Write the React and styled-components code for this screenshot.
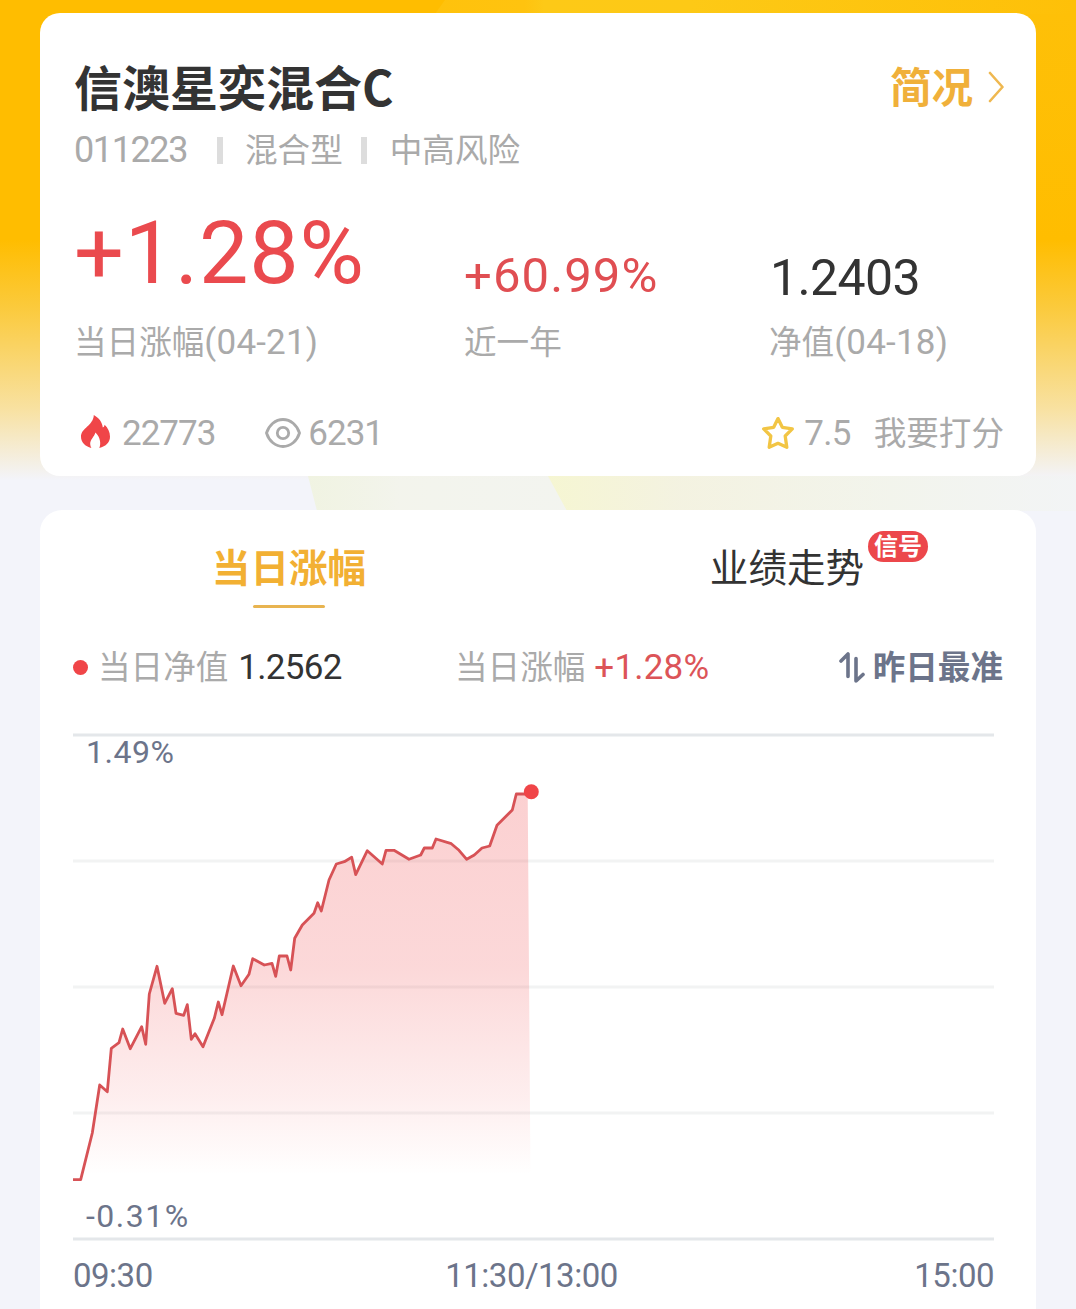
import React from "react";
import styled, { createGlobalStyle } from "styled-components";

const Global = createGlobalStyle`
  * { box-sizing: border-box; }
  body {
    margin: 0;
    background: #f3f4fa;
    font-family: Roboto, "Noto Sans CJK SC", sans-serif;
    color: #333;
  }
`;

const Page = styled.main`
  position: relative;
  width: 1076px;
  height: 1309px;
  overflow: hidden;
  padding: 13px 40px 0;
  display: flex;
  flex-direction: column;
  gap: 34px;
`;

const Backdrop = styled.svg`
  position: absolute;
  inset: 0;
  display: block;
`;

const Card = styled.section`
  position: relative;
  flex: none;
  height: ${(p) => p.$height}px;
  padding: ${(p) => p.$pad};
  border-radius: ${(p) => p.$radius || "20px"};
  background: #fff;
`;

const Row = styled.div`
  display: flex;
  align-items: center;
  justify-content: ${(p) => p.$justify || "flex-start"};
  height: ${(p) => p.$height}px;
`;

const Text = styled.span`
  font-size: ${(p) => p.$size || 32.6}px;
  font-weight: ${(p) => p.$weight || 400};
  letter-spacing: ${(p) => p.$spacing || 0}px;
  color: ${(p) => p.$color || "#aaa"};
  line-height: 1;
  white-space: nowrap;
  margin-left: ${(p) => p.$ml || 0}px;
`;

const Label = styled(Text)`
  padding-top: 2px;
`;

const IconBox = styled.span`
  display: flex;
  margin-left: ${(p) => p.$ml || 0}px;
  padding-bottom: ${(p) => p.$lift || 0}px;
`;

const Title = styled.h1`
  margin: 0;
  padding-bottom: 4px;
  font: 700 48px/1 "Noto Sans CJK SC", sans-serif;
  color: #333;
`;

const ProfileLink = styled.a`
  display: flex;
  align-items: center;
  gap: 14px;
  font: 700 41.5px/1 "Noto Sans CJK SC", sans-serif;
  color: #f0b03a;
`;

const LinkText = styled.span`
  padding-bottom: 3px;
`;

const Divider = styled.i`
  width: 6px;
  height: 27px;
  background: #ddd;
  margin-left: ${(p) => p.$ml}px;
`;

const Stats = styled.div`
  display: grid;
  grid-template-columns: 390px 305px 1fr;
  margin-top: 25px;
  height: 170px;
`;

const Stat = styled.div`
  display: flex;
  flex-direction: column;
`;

const StatValue = styled.div`
  height: 108px;
  padding-top: ${(p) => p.$top}px;
  padding-left: ${(p) => p.$left || 0}px;
  font-size: ${(p) => p.$size}px;
  letter-spacing: ${(p) => p.$spacing || 0}px;
  line-height: 1;
  color: ${(p) => p.$color};
  white-space: nowrap;
`;

const StatLabel = styled.div`
  display: flex;
  align-items: center;
  height: 66px;
`;

const Tabs = styled.nav`
  display: grid;
  grid-template-columns: 1fr 1fr;
  height: 116px;
  margin: 0 -33px;
`;

const Tab = styled.div`
  position: relative;
  display: flex;
  justify-content: center;
  align-items: center;
  height: 116px;
  padding-bottom: 6px;
  font: ${(p) => (p.$active ? 700 : 400)} 38.6px/1 "Noto Sans CJK SC", sans-serif;
  color: ${(p) => (p.$active ? "#f2b033" : "#333")};
`;

const Underline = styled.i`
  position: absolute;
  left: 213px;
  top: 95px;
  width: 72px;
  height: 3px;
  border-radius: 2px;
  background: #e8b450;
`;

const Badge = styled.b`
  position: absolute;
  left: 330px;
  top: 21px;
  width: 60px;
  height: 31px;
  padding-bottom: 3px;
  border-radius: 16px;
  display: flex;
  align-items: center;
  justify-content: center;
  font-size: 24px;
  line-height: 1;
  color: #fff;
  background: #ec474b;
`;

const Legend = styled.div`
  display: grid;
  grid-template-columns: 382px 1fr auto;
  align-items: center;
  height: 82px;
`;

const LegendItem = styled.div`
  display: flex;
  align-items: center;
`;

const Dot = styled.i`
  width: 15px;
  height: 15px;
  border-radius: 50%;
  background: #f04548;
  margin-right: 10px;
`;

const Plot = styled.div`
  display: grid;
  width: 921px;
  height: 514px;
  margin-top: 22px;
  > * { grid-area: 1 / 1; }
`;

const Bounds = styled.div`
  display: flex;
  flex-direction: column;
  justify-content: space-between;
  padding: 6px 0 12px 13px;
`;

const Axis = styled.div`
  display: grid;
  grid-template-columns: 1fr auto 1fr;
  width: 921px;
  height: 62px;
  align-items: center;
  > :nth-child(2) { padding-right: 4px; }
  > :last-child { text-align: right; }
`;

const RED = "#ea4a4e";
const SLATE = "#6c748a";

const points = [
  [73, 1179.7], [80.7, 1179.7], [92.3, 1133], [99.7, 1085], [107.3, 1091.7], [111.3, 1048.3],
  [119, 1042.7], [122.7, 1029], [130.3, 1048.7], [141.7, 1026.7], [145.7, 1044.3], [149.3, 994],
  [157, 966.3], [164.7, 1003.3], [172.3, 988.7], [176, 1013.3], [183.7, 1015.3], [187.3, 1004.7],
  [191.3, 1039.3], [195, 1033.7], [203, 1046.7], [214.3, 1018.3], [218.3, 1002], [222, 1014.7],
  [233.3, 966], [241, 985.7], [249, 974.3], [252.7, 958.7], [264.3, 965], [272, 963.3],
  [275.7, 976.3], [279.3, 956], [287, 956], [290.7, 970], [294.7, 938.3], [302.3, 925],
  [314, 913.3], [317.7, 902.7], [321.3, 911], [329, 880], [336.3, 864], [344.3, 861.7],
  [351.7, 857.3], [355.7, 874.7], [367.3, 850.7], [382.3, 864], [386, 850.3], [394, 850.3],
  [409, 859.3], [420.7, 855], [424.3, 848], [432.3, 848], [436, 839], [451.3, 843.7],
  [459, 850.3], [466.7, 859.3], [474.3, 855], [482, 848], [489.7, 846], [497, 825.3],
  [512.3, 810], [516.3, 794], [527.7, 794],
];
const line = points.map((p) => p.join(",")).join(" ");

function Flame() {
  return (
    <svg width="29" height="33" viewBox="0 0 29 33">
      <path
        d="M12.8 0C18 3 21.2 7 21.8 12.6 23 12 23.4 11 23.6 9.8 27 13 29 17 29 21.6 29 27.6 25 31.4 18.3 33 20.4 28.4 19 21.6 14.4 17.4 13.4 21.6 9 24.4 9.2 29 9.3 30.6 9.7 31.8 10.4 33 4 31.2 0 27.2 0 21.7 0 13 12.5 10.5 12.8 0Z"
        fill="#f04548"
      />
    </svg>
  );
}

function Eye() {
  return (
    <svg width="36" height="30" viewBox="0 0 36 30" fill="none" stroke="#aaa" strokeWidth="2.8">
      <path d="M1.5 15C4 7 10.400 1.500 18 1.500S32 7 34.500 15C32 23 25.600 28.500 18 28.500S4 23 1.500 15Z" />
      <circle cx="18" cy="15" r="5.700" />
    </svg>
  );
}

function Star() {
  return (
    <svg width="34" height="34" viewBox="0 0 34 34" fill="none" stroke="#f2c544" strokeWidth="3.300" strokeLinejoin="round">
      <path d="M17 2.600 21.300 11.300 31.300 12.900 24.200 20 25.800 31.300 17 27.300 8.200 31.300 9.800 20 2.700 12.900 12.700 11.300Z" />
    </svg>
  );
}

function Swap() {
  return (
    <svg width="26" height="32" viewBox="0 0 26 32" fill="none" stroke={SLATE} strokeWidth="3.600" strokeLinecap="round" strokeLinejoin="round">
      <path d="M2 10 9 3V25.500" />
      <path d="M17 7.500V30L24 23.500" />
    </svg>
  );
}

function Chart() {
  return (
    <svg width="921" height="514" viewBox="73 730 921 514">
      <defs>
        <linearGradient id="area" gradientUnits="userSpaceOnUse" x1="0" y1="794" x2="0" y2="1175">
          <stop offset="0" stopColor="#f04548" stopOpacity="0.25" />
          <stop offset="0.45" stopColor="#f04548" stopOpacity="0.21" />
          <stop offset="0.8" stopColor="#f04548" stopOpacity="0.09" />
          <stop offset="1" stopColor="#f04548" stopOpacity="0" />
        </linearGradient>
      </defs>
      {[861, 987, 1113].map((y) => (
        <path key={y} d={`M73 ${y}H994`} stroke="#f2f3f3" strokeWidth="3" />
      ))}
      {[735, 1239].map((y) => (
        <path key={y} d={`M73 ${y}H994`} stroke="#e4e7ea" strokeWidth="3" />
      ))}
      <polygon points={`${line} 530.5,1180 73,1180`} fill="url(#area)" />
      <polyline points={line} fill="none" stroke="#d75256" strokeWidth="2.8" strokeLinejoin="round" />
      <circle cx="531.3" cy="791.7" r="7.5" fill="#f04548" />
    </svg>
  );
}

function Background() {
  return (
    <Backdrop width="1076" height="1309">
      <defs>
        <linearGradient id="sky" gradientUnits="userSpaceOnUse" x1="0" y1="0" x2="0" y2="480">
          <stop offset="0" stopColor="#ffbd00" />
          <stop offset="0.5" stopColor="#ffbd00" />
          <stop offset="0.64" stopColor="#fbca3c" />
          <stop offset="0.85" stopColor="#f8e1a0" />
          <stop offset="1" stopColor="#f3f4fa" />
        </linearGradient>
        <linearGradient id="wide" x1="0" x2="1">
          <stop offset="0" stopColor="#eff3d8" stopOpacity="0.7" />
          <stop offset="0.12" stopColor="#f3f4ea" stopOpacity="0.85" />
          <stop offset="1" stopColor="#f2f4f2" stopOpacity="0.5" />
        </linearGradient>
        <linearGradient id="narrow" x1="0" x2="1">
          <stop offset="0" stopColor="#f6f6cf" stopOpacity="0.9" />
          <stop offset="0.25" stopColor="#f4f2de" stopOpacity="0.85" />
          <stop offset="0.65" stopColor="#f2f4ea" stopOpacity="0.8" />
          <stop offset="1" stopColor="#f2f4f4" stopOpacity="0.5" />
        </linearGradient>
        <linearGradient id="glow" x1="0" x2="1">
          <stop offset="0" stopColor="#ffc20c" />
          <stop offset="0.14" stopColor="#ffc30f" />
          <stop offset="0.17" stopColor="#fdc917" />
          <stop offset="0.4" stopColor="#fdc916" />
          <stop offset="1" stopColor="#fec008" />
        </linearGradient>
        <linearGradient id="edge" x1="0" y1="0" x2="0" y2="1">
          <stop offset="0" stopColor="#fec008" />
          <stop offset="1" stopColor="#fec008" stopOpacity="0" />
        </linearGradient>
      </defs>
      <rect width="1076" height="1309" fill="#f3f4fa" />
      <rect width="1076" height="480" fill="url(#sky)" />
      <path d="M445 0H1076V14H435Z" fill="url(#glow)" />
      <rect x="1010" y="14" width="66" height="226" fill="url(#edge)" />
      <path d="M308 476H1076V511H317Z" fill="url(#wide)" />
      <path d="M548 476H1076V511H567Z" fill="url(#narrow)" />
    </Backdrop>
  );
}

export default function App() {
  return (
    <Page>
      <Global />
      <Background />
      <Card $height={463} $pad="37px 32px 0 34px">
        <Row $height={74} $justify="space-between">
          <Title>信澳星奕混合C</Title>
          <ProfileLink>
            <LinkText>简况</LinkText>
            <svg width="17" height="32" viewBox="0 0 17 32" fill="none" stroke="#efb850" strokeWidth="2.6" strokeLinecap="round" strokeLinejoin="round">
              <path d="M3 2 15.500 16 3 30" />
            </svg>
          </ProfileLink>
        </Row>
        <Row $height={52}>
          <Text $size={36} $spacing={-1.4}>011223</Text>
          <Divider $ml={30} />
          <Label $ml={22}>混合型</Label>
          <Divider $ml={18} />
          <Label $ml={23}>中高风险</Label>
        </Row>
        <Stats>
          <Stat>
            <StatValue $size={88} $top={8} $left={-3} $spacing={0.8} $color={RED}>+1.28%</StatValue>
            <StatLabel>
              <Label>当日涨幅</Label>
              <Text $size={35} $spacing={0.2}>(04-21)</Text>
            </StatLabel>
          </Stat>
          <Stat>
            <StatValue $size={49} $top={50} $spacing={1.1} $color="#e04e52">+60.99%</StatValue>
            <StatLabel>
              <Label>近一年</Label>
            </StatLabel>
          </Stat>
          <Stat>
            <StatValue $size={50} $top={52} $left={1} $spacing={-0.6} $color="#333">1.2403</StatValue>
            <StatLabel>
              <Label>净值</Label>
              <Text $size={35} $spacing={0.2}>(04-18)</Text>
            </StatLabel>
          </Stat>
        </Stats>
        <Row $height={124} $justify="space-between">
          <Row $height={40}>
            <IconBox $ml={7} $lift={4}><Flame /></IconBox>
            <Text $ml={12} $size={35} $spacing={-1}>22773</Text>
            <IconBox $ml={50}><Eye /></IconBox>
            <Text $ml={7} $size={35} $spacing={-1}>6231</Text>
          </Row>
          <Row $height={40}>
            <Star />
            <Text $ml={9} $size={35} $spacing={-0.7}>7.5</Text>
            <Label $ml={23}>我要打分</Label>
          </Row>
        </Row>
      </Card>

      <Card $height={820} $pad="0 33px" $radius="22px">
        <Tabs>
          <Tab $active>
            当日涨幅
            <Underline />
          </Tab>
          <Tab>
            业绩走势
            <Badge>信号</Badge>
          </Tab>
        </Tabs>
        <Legend>
          <LegendItem>
            <Dot />
            <Label>当日净值</Label>
            <Text $ml={10} $size={35} $spacing={-0.7} $color="#333">1.2562</Text>
          </LegendItem>
          <LegendItem>
            <Label>当日涨幅</Label>
            <Text $ml={9} $size={35} $spacing={0.2} $color="#dc5458">+1.28%</Text>
          </LegendItem>
          <LegendItem>
            <Swap />
            <Label $ml={8} $weight={700} $color={SLATE}>昨日最准</Label>
          </LegendItem>
        </Legend>
        <Plot>
          <Chart />
          <Bounds>
            <Text $size={32} $spacing={0.5} $color={SLATE}>1.49%</Text>
            <Text $size={32} $spacing={1.5} $color={SLATE}>-0.31%</Text>
          </Bounds>
        </Plot>
        <Axis>
          <Text $size={33} $spacing={-0.5} $color={SLATE}>09:30</Text>
          <Text $size={33} $spacing={-0.5} $color={SLATE}>11:30/13:00</Text>
          <Text $size={33} $spacing={-0.5} $color={SLATE}>15:00</Text>
        </Axis>
      </Card>
    </Page>
  );
}
